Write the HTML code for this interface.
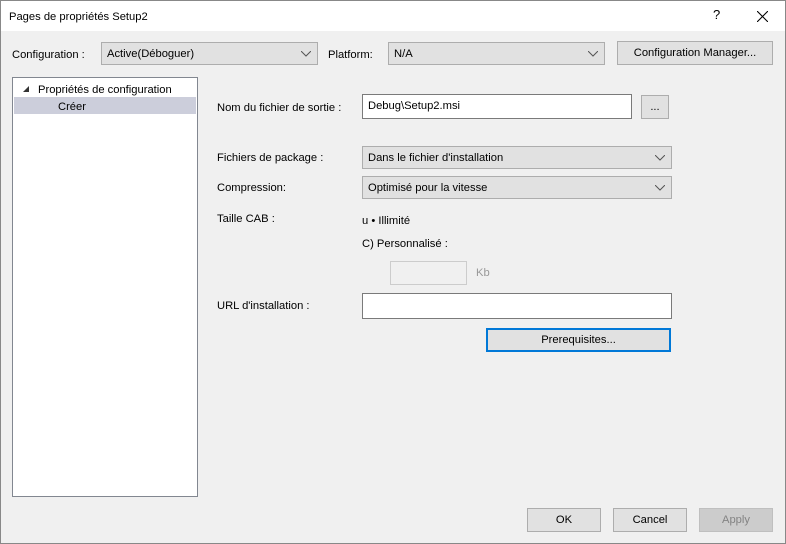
<!DOCTYPE html><html><head><style>
*{box-sizing:border-box;margin:0;padding:0}
body{width:786px;height:544px;background:#f0f0f0;font:11.2px "Liberation Sans",sans-serif;color:#000;position:relative;overflow:hidden}
.a{position:absolute;white-space:nowrap}
.t{line-height:14px}
.cb{position:absolute;background:#e1e1e1;border:1px solid #adadad;line-height:22px;padding-left:5px}
.cb svg{position:absolute;right:6px;top:8px}
.tb{position:absolute;background:#fff;border:1px solid #7a7a7a;padding-left:5px;line-height:23px}
.bt{position:absolute;background:#e1e1e1;border:1px solid #adadad;text-align:center;line-height:23px}
</style></head><body>
<div class="a" style="left:0;top:0;width:786px;height:31px;background:#fff"></div>
<div class="a" style="left:0;top:0;width:786px;height:544px;border:1px solid #888"></div>
<div class="a t" style="left:9px;top:10px">Pages de propriétés Setup2</div>
<div class="a" style="left:713px;top:7px;font-size:13px">?</div>
<svg class="a" style="left:757px;top:11px" width="11" height="11"><path d="M0 0L11 11M11 0L0 11" stroke="#000" stroke-width="1.1"/></svg>
<div class="a t" style="left:12px;top:48px">Configuration :</div>
<div class="cb" style="left:101px;top:42px;width:217px;height:23px">Active(Déboguer)<svg width="10" height="6"><path d="M0 0L5 5L10 0" fill="none" stroke="#555"/></svg></div>
<div class="a t" style="left:328px;top:48px">Platform:</div>
<div class="cb" style="left:388px;top:42px;width:217px;height:23px">N/A<svg width="10" height="6"><path d="M0 0L5 5L10 0" fill="none" stroke="#555"/></svg></div>
<div class="bt" style="left:617px;top:41px;width:156px;height:24px">Configuration Manager...</div>
<div class="a" style="left:12px;top:77px;width:186px;height:420px;background:#fff;border:1px solid #828790"></div>
<div class="a" style="left:14px;top:97px;width:182px;height:17px;background:#cccedb"></div>
<svg class="a" style="left:23px;top:86px" width="7" height="7"><path d="M6 0L6 6L0 6Z" fill="#333"/></svg>
<div class="a t" style="left:38px;top:83px">Propriétés de configuration</div>
<div class="a t" style="left:58px;top:100px">Créer</div>
<div class="a t" style="left:217px;top:101px">Nom du fichier de sortie :</div>
<div class="tb" style="left:362px;top:94px;width:270px;height:25px">Debug\Setup2.msi</div>
<div class="bt" style="left:641px;top:95px;width:28px;height:24px">...</div>
<div class="a t" style="left:217px;top:151px">Fichiers de package :</div>
<div class="cb" style="left:362px;top:146px;width:310px;height:23px">Dans le fichier d'installation<svg width="10" height="6"><path d="M0 0L5 5L10 0" fill="none" stroke="#555"/></svg></div>
<div class="a t" style="left:217px;top:181px">Compression:</div>
<div class="cb" style="left:362px;top:176px;width:310px;height:23px">Optimisé pour la vitesse<svg width="10" height="6"><path d="M0 0L5 5L10 0" fill="none" stroke="#555"/></svg></div>
<div class="a t" style="left:217px;top:212px">Taille CAB :</div>
<div class="a t" style="left:362px;top:214px">u • Illimité</div>
<div class="a t" style="left:362px;top:237px">C) Personnalisé :</div>
<div class="a" style="left:390px;top:261px;width:77px;height:24px;border:1px solid #ccc;background:#f0f0f0"></div>
<div class="a t" style="left:476px;top:266px;color:#999">Kb</div>
<div class="a t" style="left:217px;top:299px">URL d'installation :</div>
<div class="tb" style="left:362px;top:293px;width:310px;height:26px"></div>
<div class="bt" style="left:486px;top:328px;width:185px;height:24px;border:2px solid #0078d7;line-height:21px">Prerequisites...</div>
<div class="bt" style="left:527px;top:508px;width:74px;height:24px">OK</div>
<div class="bt" style="left:613px;top:508px;width:74px;height:24px">Cancel</div>
<div class="bt" style="left:699px;top:508px;width:74px;height:24px;background:#ccc;border-color:#bfbfbf;color:#838383">Apply</div>
</body></html>
